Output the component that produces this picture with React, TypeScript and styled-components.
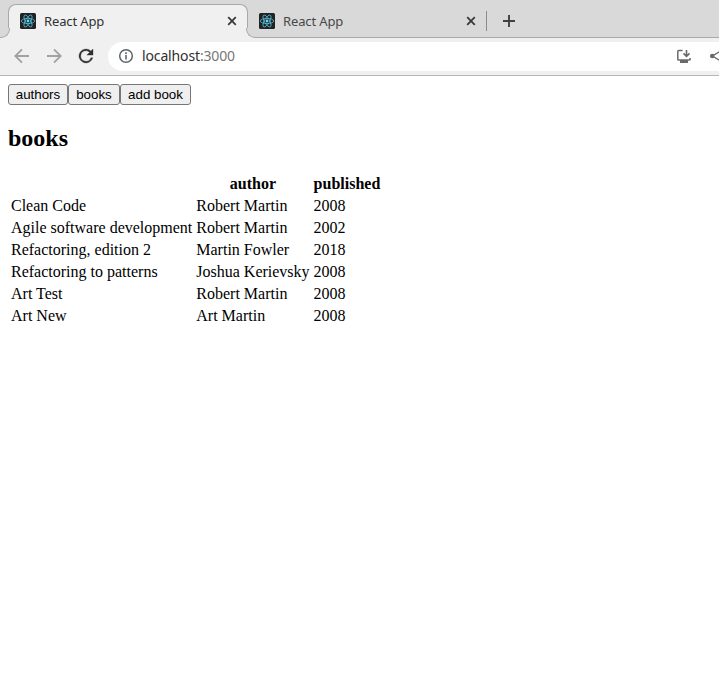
import React from "react";
import styled, { createGlobalStyle, css } from "styled-components";

const STRIP = "#d9d9d9";
const BAR = "#f0f0f0";
const EDGE = "#a9a9a9";

const GlobalStyle = createGlobalStyle`
  html, body { margin: 0; background: #fff; overflow: hidden; }
  * { box-sizing: border-box; }
`;

const Browser = styled.div`
  width: 100%;
  height: 100vh;
  overflow: hidden;
  font-family: "Noto Sans", "Open Sans", sans-serif;
`;

const TabStrip = styled.div`
  display: flex;
  align-items: flex-end;
  height: 38px;
  padding-left: 8px;
  background: ${STRIP};
  box-shadow: inset 0 -1px 0 ${EDGE};
`;

const Tab = styled.div<{ $active?: boolean }>`
  position: relative;
  flex: none;
  display: flex;
  align-items: center;
  width: ${(p) => (p.$active ? 240 : 238)}px;
  height: 34px;
  padding: ${(p) => (p.$active ? "0 10px 2px 11px" : "0 9px 2px 10px")};
  border: 1px solid transparent;
  border-bottom: 0;
  color: ${(p) => (p.$active ? "#303030" : "#484848")};
  ${(p) =>
    p.$active &&
    css`
      background: ${BAR};
      border-color: ${EDGE};
      border-radius: 8px 8px 0 0;
      &::before,
      &::after {
        content: "";
        position: absolute;
        bottom: 0;
        width: 9px;
        height: 9px;
        background: ${STRIP};
        border-bottom: 1px solid ${EDGE};
        box-shadow: 0 0 0 8px ${BAR};
        clip-path: inset(0);
      }
      &::before {
        left: -9px;
        border-right: 1px solid ${EDGE};
        border-bottom-right-radius: 9px;
      }
      &::after {
        right: -9px;
        border-left: 1px solid ${EDGE};
        border-bottom-left-radius: 9px;
      }
    `}
`;

const TabTitle = styled.span`
  flex: 1;
  margin-left: 8px;
  font-size: 13px;
  line-height: 18px;
  letter-spacing: -0.12px;
`;

const Icon = styled.svg`
  display: block;
  flex: none;
`;

const Divider = styled.div`
  flex: none;
  width: 1px;
  height: 20px;
  margin-bottom: 7px;
  background: #8c8c8c;
`;

const NewTab = styled.div`
  margin: 0 0 10px 15px;
`;

const Toolbar = styled.div`
  display: flex;
  align-items: center;
  height: 38px;
  padding: 3px 0 3px 14px;
  background: ${BAR};
  border-bottom: 1px solid #b6b6b6;
`;

const NavIcons = styled.div`
  display: flex;
  flex: none;
  gap: 16px;
  width: 94px;
  height: 16px;
  margin-bottom: 1px;
`;

const Omnibox = styled.div`
  flex: 1;
  min-width: 0;
  display: flex;
  align-items: center;
  height: 29px;
  padding: 0 0 1px 10px;
  background: #fff;
  border-radius: 15px 0 0 15px;
  overflow: hidden;
`;

const Address = styled.span`
  flex: 1;
  margin-left: 8px;
  font-size: 14px;
  line-height: 20px;
  letter-spacing: -0.14px;
  color: #2f2f2f;
`;

const Port = styled.span`
  color: #777;
`;

const Actions = styled.div`
  display: flex;
  flex: none;
  gap: 17px;
  width: 43px;
`;

const Page = styled.main`
  padding: 8px;
  font-family: "Liberation Serif", serif;
  font-size: 16px;
  color: #000;
`;

const Menu = styled.div`
  display: flex;
`;

const MenuButton = styled.button<{ $width: number }>`
  width: ${(p) => p.$width}px;
  height: 21px;
  padding: 0;
  border: 1px solid #767676;
  border-radius: 3px;
  background: #efefef;
  color: #000;
  font: 13.333px/15px "Liberation Sans", sans-serif;
  white-space: nowrap;
`;

const Heading = styled.h2`
  margin: 20px 0;
  font-size: 24px;
  line-height: 27px;
`;

const BookTable = styled.table`
  border-spacing: 2px;
  line-height: 18px;
`;

const HeadCell = styled.th`
  padding: 1px;
  text-align: center;
`;

const Cell = styled.td`
  padding: 1px;
  white-space: nowrap;
`;

const ReactLogo = () => (
  <Icon width="16" height="16" viewBox="0 0 16 16">
    <rect width="16" height="16" rx="1.5" fill="#222" />
    <g fill="none" stroke="#53bdd8" strokeWidth="0.8">
      <ellipse cx="8" cy="8" rx="6.7" ry="2.6" />
      <ellipse cx="8" cy="8" rx="6.7" ry="2.6" transform="rotate(60 8 8)" />
      <ellipse cx="8" cy="8" rx="6.7" ry="2.6" transform="rotate(120 8 8)" />
    </g>
    <circle cx="8" cy="8" r="1.4" fill="#61dafb" />
  </Icon>
);

const CloseIcon = () => (
  <Icon width="10" height="10" viewBox="0 0 10 10">
    <path d="M1.2 1.2 8.8 8.8M8.8 1.2 1.2 8.8" stroke="#3a3a3a" strokeWidth="1.8" />
  </Icon>
);

const ArrowIcon = ({ forward = false }: { forward?: boolean }) => (
  <Icon width="16" height="16" viewBox="0 0 16 16">
    <path
      d={forward ? "M1 8H14M8 1.3 14.7 8 8 14.7" : "M15 8H2M8 1.3 1.3 8 8 14.7"}
      fill="none"
      stroke="#a2a2a2"
      strokeWidth="1.9"
    />
  </Icon>
);

const ReloadIcon = () => (
  <Icon width="16" height="16" viewBox="2.86 2.86 18.28 18.28">
    <path
      d="M17.65 6.35A8 8 0 1 0 19.73 14H17.65A6 6 0 1 1 12 6C13.66 6 15.14 6.69 16.22 7.78L13 11H20V4Z"
      fill="#303030"
      stroke="#303030"
      strokeWidth="0.4"
    />
  </Icon>
);

const InfoIcon = () => (
  <Icon width="16" height="16" viewBox="0 0 16 16">
    <circle cx="8" cy="8" r="6.3" fill="none" stroke="#5f6368" strokeWidth="1.5" />
    <path d="M8 7V11.6M8 4.3V5.9" stroke="#5f6368" strokeWidth="1.6" />
  </Icon>
);

const InstallIcon = () => (
  <Icon width="16" height="16" viewBox="0 0 16 16">
    <path
      d="M6.5 2.6H2.6Q1.8 2.6 1.8 3.4V11.3Q1.8 12.1 2.6 12.1H13.3Q14.1 12.1 14.1 11.3V10"
      fill="none"
      stroke="#6a6a6a"
      strokeWidth="1.5"
    />
    <path d="M4 12H12V15H4Z" fill="#6a6a6a" />
    <path d="M10.5 2V8M7.5 5.4 10.5 8.4 13.5 5.4" fill="none" stroke="#6a6a6a" strokeWidth="1.6" />
  </Icon>
);

const ShareIcon = () => (
  <Icon width="16" height="16" viewBox="0 0 16 16">
    <path d="M12.5 2.5 3.3 8 12.5 13.5" fill="none" stroke="#6a6a6a" strokeWidth="1.4" />
    <g fill="#6a6a6a">
      <circle cx="3.2" cy="8" r="2.3" />
      <circle cx="12.2" cy="2.7" r="2.3" />
      <circle cx="12.2" cy="13.3" r="2.3" />
    </g>
  </Icon>
);

const books = [
  ["Clean Code", "Robert Martin", 2008],
  ["Agile software development", "Robert Martin", 2002],
  ["Refactoring, edition 2", "Martin Fowler", 2018],
  ["Refactoring to patterns", "Joshua Kerievsky", 2008],
  ["Art Test", "Robert Martin", 2008],
  ["Art New", "Art Martin", 2008],
] as const;

export default function App() {
  return (
    <Browser>
      <GlobalStyle />
      <TabStrip>
        <Tab $active>
          <ReactLogo />
          <TabTitle>React App</TabTitle>
          <CloseIcon />
        </Tab>
        <Tab>
          <ReactLogo />
          <TabTitle>React App</TabTitle>
          <CloseIcon />
        </Tab>
        <Divider />
        <NewTab>
          <Icon width="14" height="14" viewBox="0 0 14 14">
            <path d="M7 1V13M1 7H13" stroke="#404040" strokeWidth="1.9" />
          </Icon>
        </NewTab>
      </TabStrip>
      <Toolbar>
        <NavIcons>
          <ArrowIcon />
          <ArrowIcon forward />
          <ReloadIcon />
        </NavIcons>
        <Omnibox>
          <InfoIcon />
          <Address>
            localhost<Port>:3000</Port>
          </Address>
          <Actions>
            <InstallIcon />
            <ShareIcon />
          </Actions>
        </Omnibox>
      </Toolbar>
      <Page>
        <Menu>
          <MenuButton $width={60}>authors</MenuButton>
          <MenuButton $width={52}>books</MenuButton>
          <MenuButton $width={71}>add book</MenuButton>
        </Menu>
        <Heading>books</Heading>
        <BookTable>
          <tbody>
            <tr>
              <HeadCell />
              <HeadCell>author</HeadCell>
              <HeadCell>published</HeadCell>
            </tr>
            {books.map(([title, author, published]) => (
              <tr key={title}>
                <Cell>{title}</Cell>
                <Cell>{author}</Cell>
                <Cell>{published}</Cell>
              </tr>
            ))}
          </tbody>
        </BookTable>
      </Page>
    </Browser>
  );
}
